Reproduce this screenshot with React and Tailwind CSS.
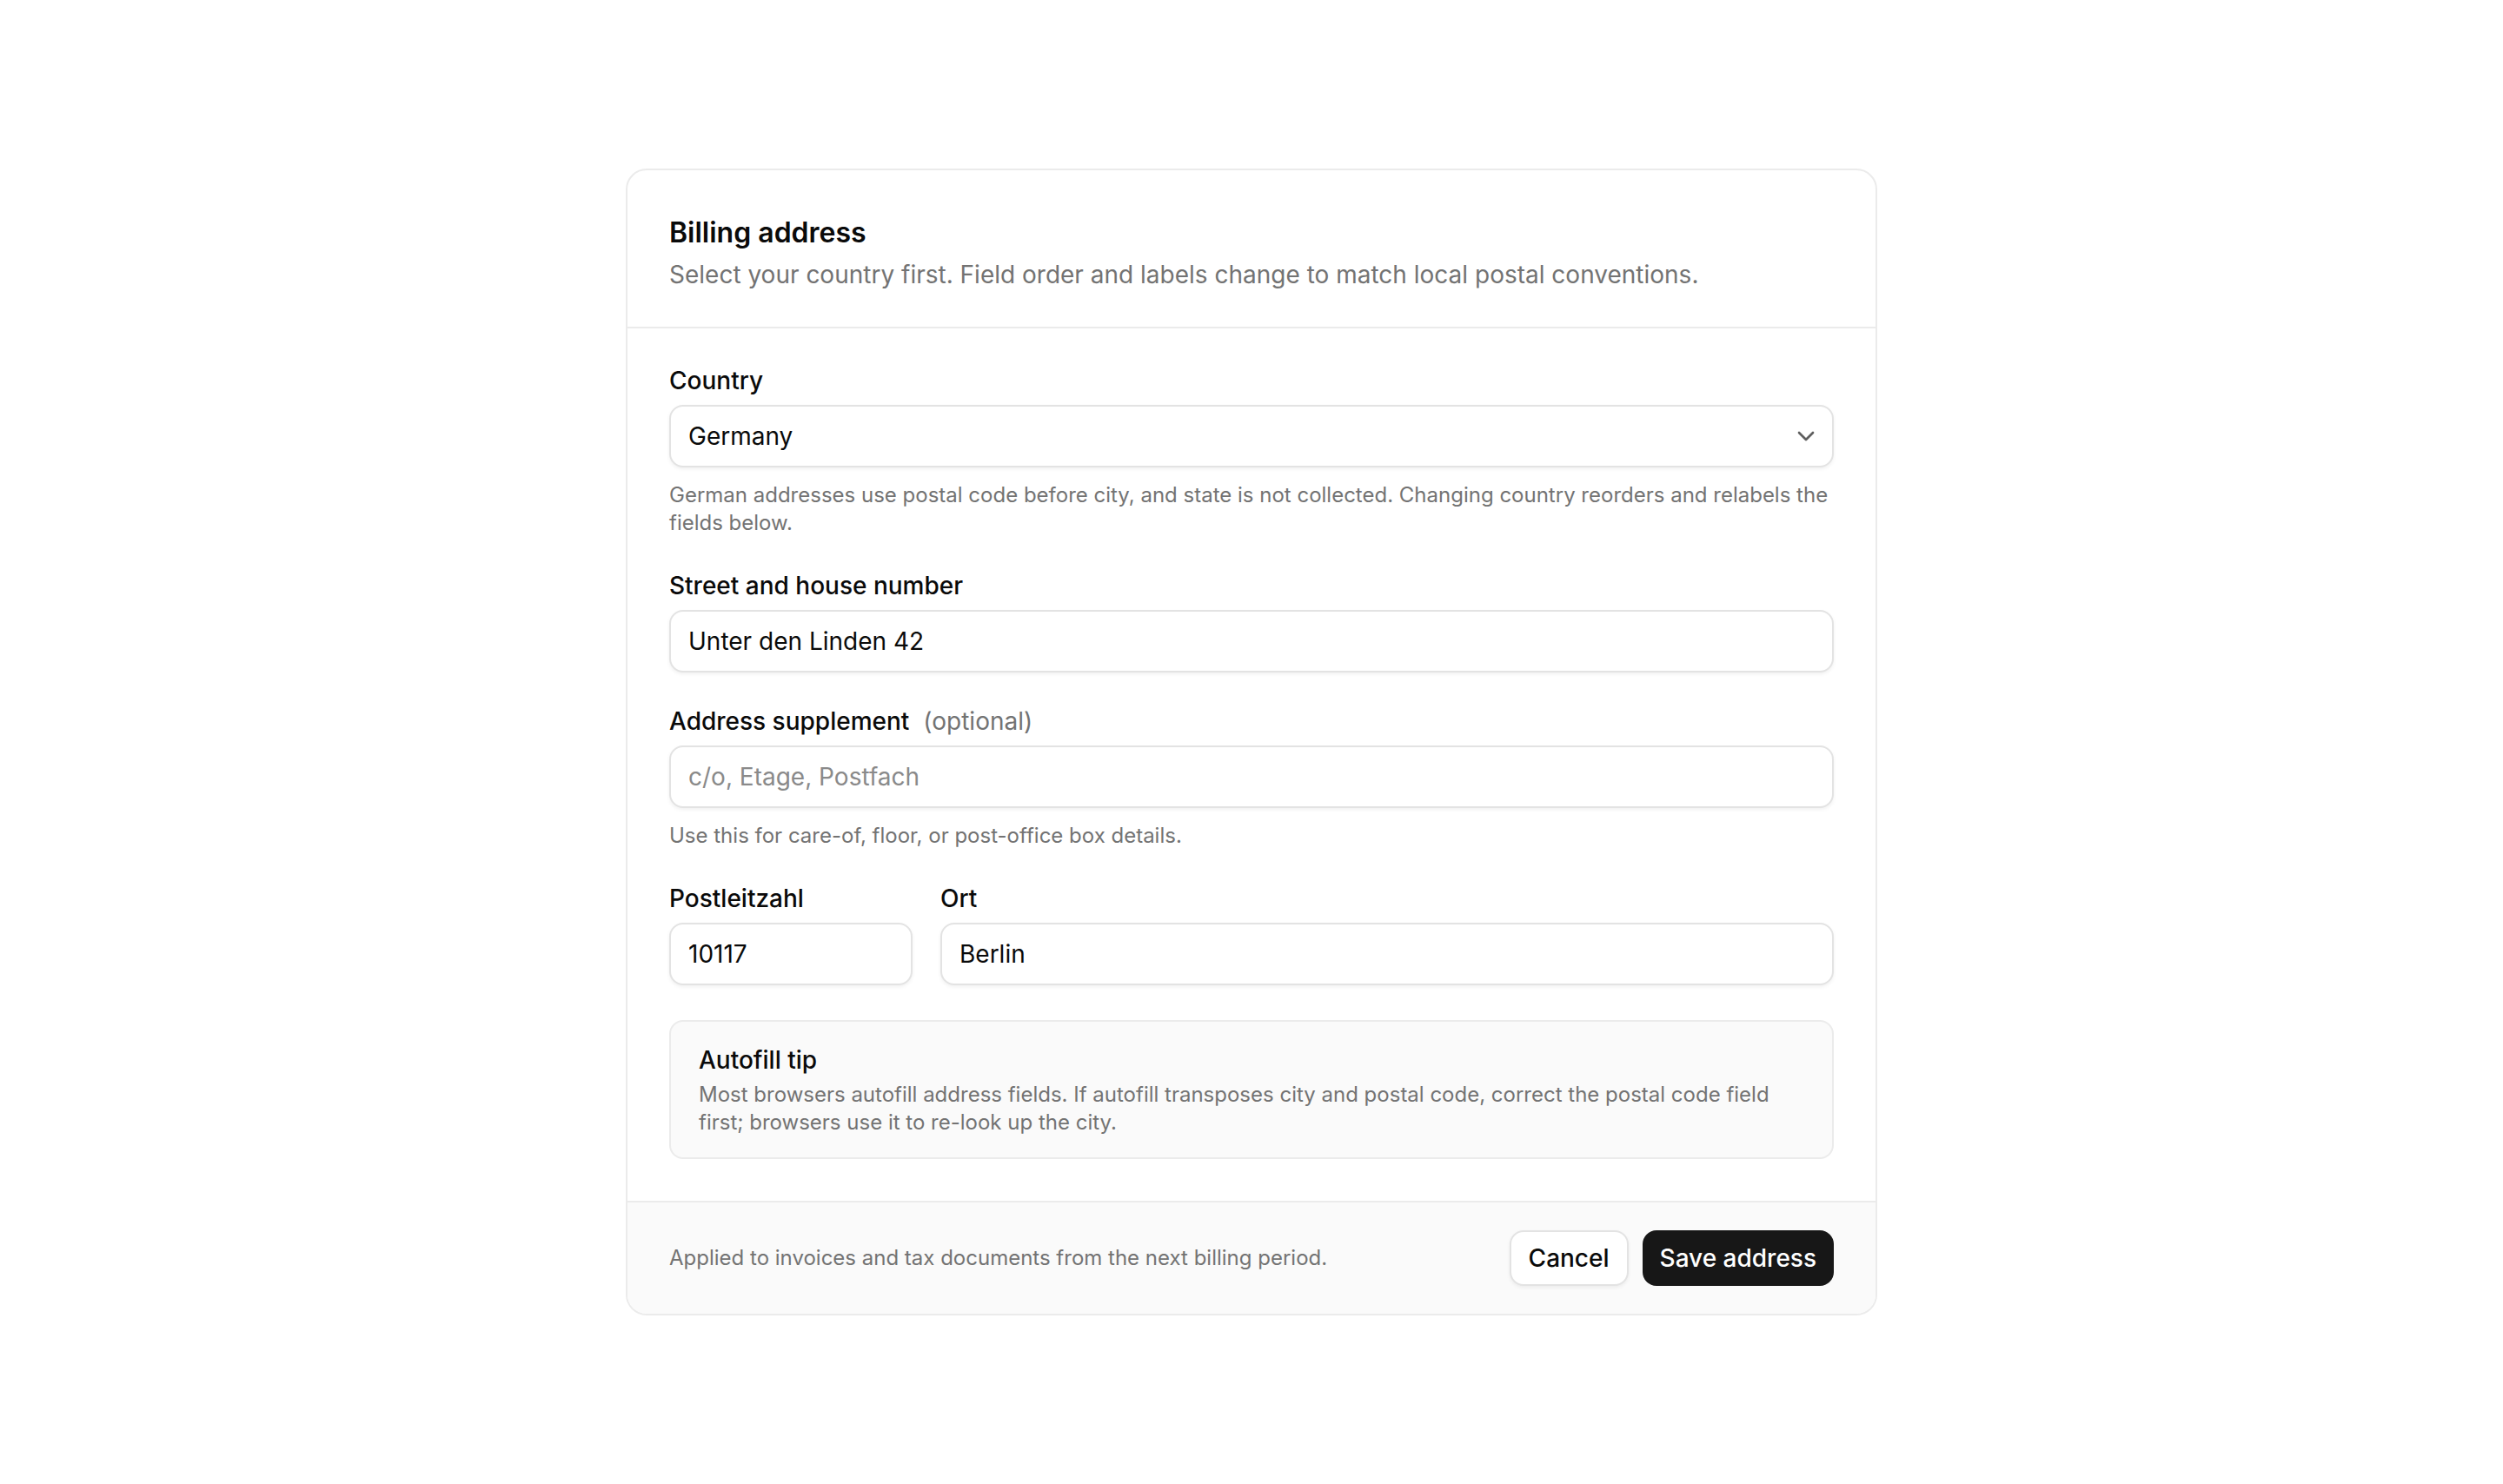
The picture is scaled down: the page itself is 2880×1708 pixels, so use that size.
import React, { useState } from 'react'

const inputCls =
    'h-[72px] w-full rounded-2xl border-2 border-[#e3e3e3] bg-white px-5 text-[28px] text-[#0a0a0a] shadow-[0_2px_4px_rgba(0,0,0,0.06)] outline-none placeholder:text-[#8a8a8a]'

function Field({ label, optional, htmlFor, children, hint }) {
    return (
        <div>
            <label htmlFor={htmlFor} className="flex items-center text-[28px] font-medium leading-10 text-[#0a0a0a]">
                {label}
                {optional && <span className="ml-4 font-normal text-[#737373]">(optional)</span>}
            </label>
            <div className="mt-2">{children}</div>
            {hint && <p className="mt-4 text-2xl leading-8 text-[#737373]">{hint}</p>}
        </div>
    )
}

export default function App() {
    const [country, setCountry] = useState('Germany')
    const [street, setStreet] = useState('Unter den Linden 42')
    const [supplement, setSupplement] = useState('')
    const [zip, setZip] = useState('10117')
    const [city, setCity] = useState('Berlin')

    return (
        <div className="flex min-h-screen items-center justify-center bg-white font-['Inter',sans-serif] text-[#0a0a0a]">
            <div className="w-[1440px] overflow-hidden rounded-3xl border-2 border-[#ebebeb] bg-white">
                <div className="border-b-2 border-[#ebebeb] px-12 pb-10 pt-12">
                    <h1 className="text-[32px] font-semibold leading-[48px]">Billing address</h1>
                    <p className="mt-1 text-[28px] leading-10 text-[#737373]">
                        Select your country first. Field order and labels change to match local postal conventions.
                    </p>
                </div>

                <div className="flex flex-col gap-9 px-12 pb-12 pt-10">
                    <Field
                        label="Country"
                        htmlFor="country"
                        hint="German addresses use postal code before city, and state is not collected. Changing country reorders and relabels the fields below."
                    >
                        <div className="relative">
                            <select
                                id="country"
                                value={country}
                                onChange={(e) => setCountry(e.target.value)}
                                className={`${inputCls} appearance-none pr-16`}
                            >
                                <option>Germany</option>
                                <option>Austria</option>
                                <option>Switzerland</option>
                                <option>United States</option>
                            </select>
                            <svg
                                className="pointer-events-none absolute right-4 top-1/2 h-8 w-8 -translate-y-1/2 text-[#5f5f5f]"
                                viewBox="0 0 24 24"
                                fill="none"
                                stroke="currentColor"
                                strokeWidth="2"
                                strokeLinecap="round"
                                strokeLinejoin="round"
                            >
                                <path d="m6 9 6 6 6-6" />
                            </svg>
                        </div>
                    </Field>

                    <Field label="Street and house number" htmlFor="street">
                        <input id="street" value={street} onChange={(e) => setStreet(e.target.value)} className={inputCls} />
                    </Field>

                    <Field
                        label="Address supplement"
                        optional
                        htmlFor="supplement"
                        hint="Use this for care-of, floor, or post-office box details."
                    >
                        <input
                            id="supplement"
                            value={supplement}
                            onChange={(e) => setSupplement(e.target.value)}
                            placeholder="c/o, Etage, Postfach"
                            className={inputCls}
                        />
                    </Field>

                    <div className="grid grid-cols-[280px_1fr] gap-8">
                        <Field label="Postleitzahl" htmlFor="zip">
                            <input id="zip" value={zip} onChange={(e) => setZip(e.target.value)} className={inputCls} />
                        </Field>
                        <Field label="Ort" htmlFor="city">
                            <input id="city" value={city} onChange={(e) => setCity(e.target.value)} className={inputCls} />
                        </Field>
                    </div>

                    <div className="mt-1 rounded-2xl border-2 border-[#ebebeb] bg-[#fafafa] px-8 py-6">
                        <div className="text-[28px] font-medium leading-10">Autofill tip</div>
                        <p className="mt-1 text-2xl leading-8 text-[#737373]">
                            Most browsers autofill address fields. If autofill transposes city and postal code, correct the postal code field first; browsers use it to re-look up the city.
                        </p>
                    </div>
                </div>

                <div className="flex items-center justify-between border-t-2 border-[#ebebeb] bg-[#fafafa] px-12 py-8">
                    <p className="text-2xl leading-8 text-[#737373]">
                        Applied to invoices and tax documents from the next billing period.
                    </p>
                    <div className="flex items-center gap-4">
                        <button className="h-16 rounded-2xl border-2 border-[#e3e3e3] bg-white px-5 text-[28px] font-medium shadow-[0_2px_4px_rgba(0,0,0,0.06)]">
                            Cancel
                        </button>
                        <button className="h-16 rounded-2xl bg-[#171717] px-5 text-[28px] font-medium text-white">
                            Save address
                        </button>
                    </div>
                </div>
            </div>
        </div>
    )
}
